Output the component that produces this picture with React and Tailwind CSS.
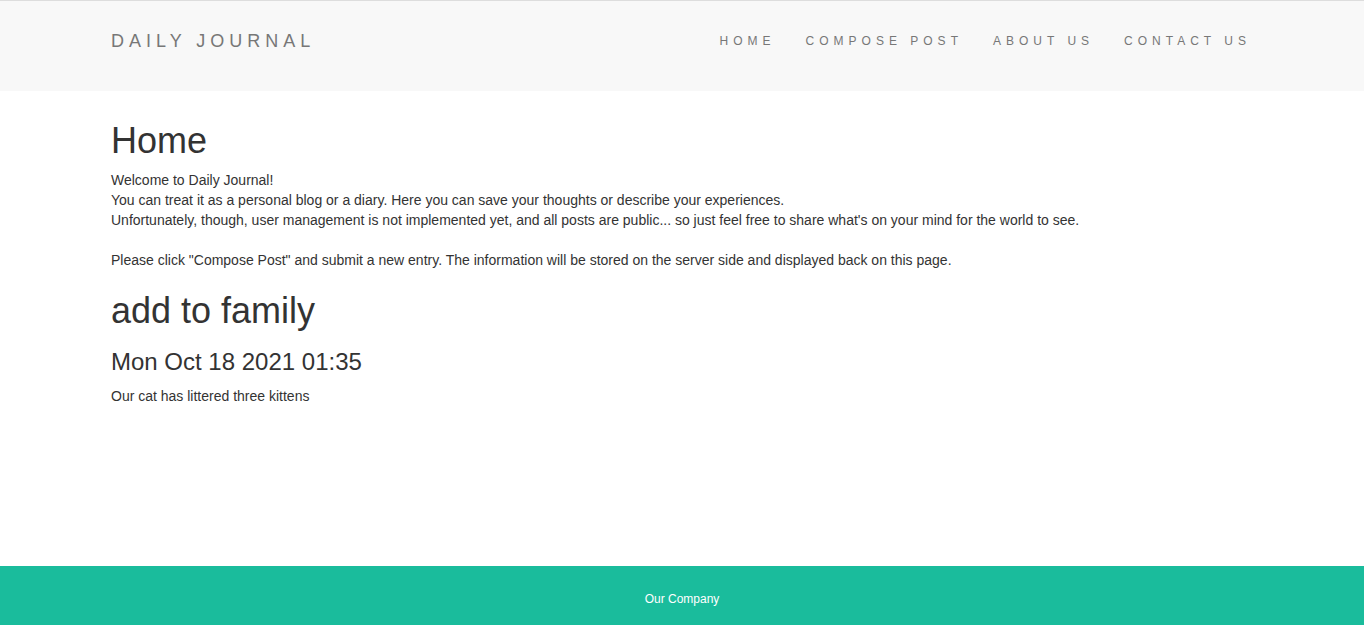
const navLinks = ["Home", "Compose Post", "About Us", "Contact Us"];

const posts = [
    {
        title: "add to family",
        date: "Mon Oct 18 2021 01:35",
        body: "Our cat has littered three kittens",
    },
];

const App = () => {
    return (
        <div className="min-h-screen flex flex-col bg-white text-[#333] text-[14px] leading-[20px] font-['Liberation_Sans',Arial,sans-serif]">
            {/* top navbar */}
            <nav className="h-[91px] bg-[#f8f8f8] border-t border-[#dddddd]">
                <div className="w-[1172px] mx-auto px-[15px] pt-[30px] flex justify-between">
                    <a href="#" className="text-[18px] leading-[20px] tracking-[5px] uppercase text-[#777]">
                        Daily Journal
                    </a>
                    <ul className="flex -mr-[13px]">
                        {navLinks.map((link) => (
                            <li key={link}>
                                <a href="#" className="block px-[15px] text-[12px] leading-[20px] tracking-[5px] uppercase text-[#777]">
                                    {link}
                                </a>
                            </li>
                        ))}
                    </ul>
                </div>
            </nav>

            <main className="flex-1">
                <div className="w-[1172px] mx-auto px-[15px] pt-[30px]">
                    <h1 className="text-[36px] leading-[1.1] mb-[9px]">Home</h1>
                    <p className="mb-[10px]">
                        Welcome to Daily Journal!
                        <br />
                        You can treat it as a personal blog or a diary. Here you can save your thoughts or describe your experiences.
                        <br />
                        Unfortunately, though, user management is not implemented yet, and all posts are public... so just feel free to share what's on your mind for the world to see.
                        <br />
                        <br />
                        Please click "Compose Post" and submit a new entry. The information will be stored on the server side and displayed back on this page.
                    </p>

                    {posts.map((post) => (
                        <div key={post.title}>
                            <h1 className="text-[36px] leading-[1.1] mt-[21px] mb-[10px]">{post.title}</h1>
                            <h3 className="text-[24px] leading-[1.1] mt-[19px] mb-[10px]">{post.date}</h3>
                            <p className="mb-[10px]">{post.body}</p>
                        </div>
                    ))}
                </div>
            </main>

            <footer className="h-[59px] bg-[#1abc9c] text-white text-center text-[12px] leading-[20px] pt-[23px]">
                Our Company
            </footer>
        </div>
    );
};

export default App;
